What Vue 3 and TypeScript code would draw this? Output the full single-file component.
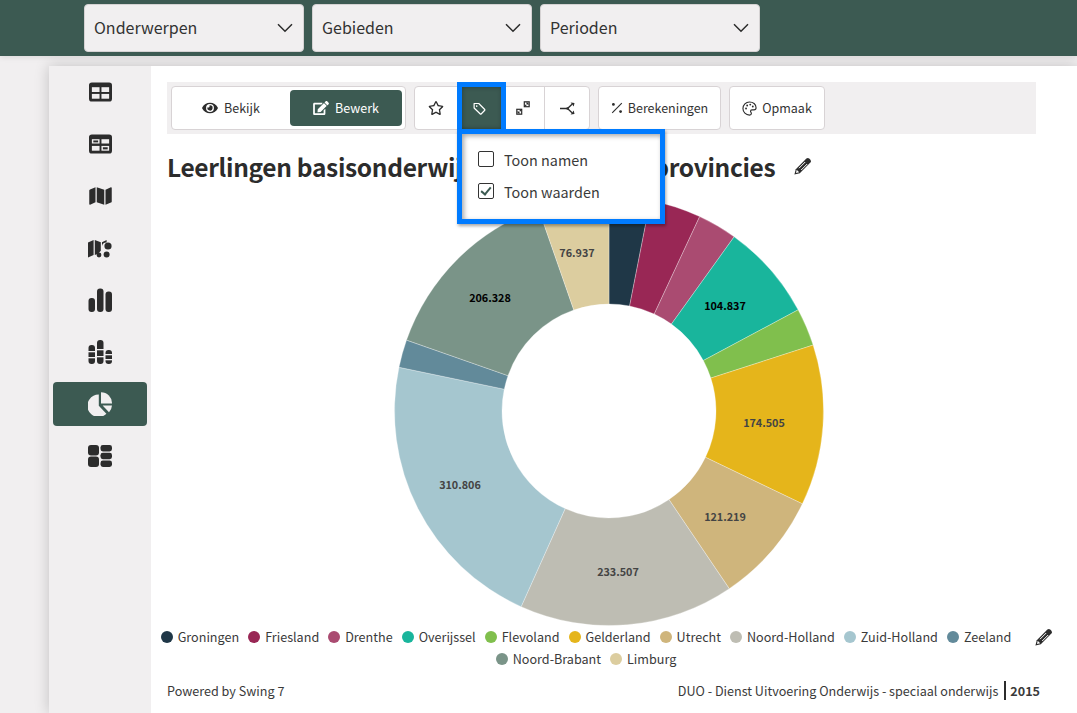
<script setup lang="ts">
interface Slice { name: string; value: number; color: string; label?: string; lx?: number; ly?: number; lc?: string }

const slices: Slice[] = [
  { name: 'Groningen', value: 44.5, color: '#1f3747' },
  { name: 'Friesland', value: 55.7, color: '#992755' },
  { name: 'Drenthe', value: 42.8, color: '#aa4b71' },
  { name: 'Overijssel', value: 104.837, color: '#19b59c', label: '104.837', lx: 725, ly: 305, lc: '#000' },
  { name: 'Flevoland', value: 41, color: '#80bf4d' },
  { name: 'Gelderland', value: 174.505, color: '#e5b51b', label: '174.505', lx: 764, ly: 422, lc: '#444' },
  { name: 'Utrecht', value: 121.219, color: '#cfb57c', label: '121.219', lx: 725, ly: 516, lc: '#444' },
  { name: 'Noord-Holland', value: 233.507, color: '#bebdb3', label: '233.507', lx: 618, ly: 571, lc: '#444' },
  { name: 'Zuid-Holland', value: 310.806, color: '#a5c6cf', label: '310.806', lx: 460, ly: 484, lc: '#444' },
  { name: 'Zeeland', value: 30.2, color: '#628a9a' },
  { name: 'Noord-Brabant', value: 206.328, color: '#7a9488', label: '206.328', lx: 490, ly: 297, lc: '#000' },
  { name: 'Limburg', value: 76.937, color: '#dccd9f', label: '76.937', lx: 577, ly: 252, lc: '#444' },
]

// svg origin on the page: chart box is 440 square, centred on the donut
const cx = 220
const cy = 220
const R = 214.5
const r = 107
const originX = 609 - cx
const originY = 411.5 - cy

const total = slices.reduce((s, x) => s + x.value, 0)
const pt = (rad: number, a: number) =>
  `${(cx + rad * Math.sin(a)).toFixed(2)} ${(cy - rad * Math.cos(a)).toFixed(2)}`

let acc = 0
const arcs = slices.map((s) => {
  const a0 = (acc / total) * Math.PI * 2
  acc += s.value
  const a1 = (acc / total) * Math.PI * 2
  const large = a1 - a0 > Math.PI ? 1 : 0
  return {
    ...s,
    d: `M${pt(R, a0)} A${R} ${R} 0 ${large} 1 ${pt(R, a1)} L${pt(r, a1)} A${r} ${r} 0 ${large} 0 ${pt(r, a0)} Z`,
    tx: (s.lx ?? 0) - originX,
    ty: (s.ly ?? 0) - originY,
  }
})

const filters = ['Onderwerpen', 'Gebieden', 'Perioden']
</script>

<template>
  <div class="page">
    <header class="topbar">
      <div v-for="f in filters" :key="f" class="select">
        <span>{{ f }}</span>
        <svg class="chev" viewBox="0 0 16 10" width="16" height="10"><path d="M1 1.2l7 7 7-7" fill="none" stroke="#2b2b2b" stroke-width="1.5" /></svg>
      </div>
    </header>

    <div class="card">
      <nav class="side">
        <div class="nav">
          <svg viewBox="0 0 24 20" width="23" height="20"><rect width="24" height="20" rx="3" fill="#2c2c2c" /><g fill="#f1eff0"><rect x="3" y="5" width="8" height="5" /><rect x="13" y="5" width="8" height="5" /><rect x="3" y="12" width="8" height="5" /><rect x="13" y="12" width="8" height="5" /></g></svg>
        </div>
        <div class="nav">
          <svg viewBox="0 0 24 20" width="23" height="20"><rect width="24" height="20" rx="3" fill="#2c2c2c" /><g fill="#f1eff0"><rect x="3" y="5" width="8" height="4.5" /><rect x="13" y="5" width="8" height="4.5" /><rect x="3" y="12" width="8" height="5" /><rect x="13" y="12" width="8" height="5" /></g><g fill="#2c2c2c"><rect x="4.5" y="6.3" width="5" height="2" /><rect x="14.5" y="13.4" width="5" height="2.2" /></g></svg>
        </div>
        <div class="nav">
          <svg viewBox="0 0 576 512" width="23" height="20"><path fill="#2c2c2c" d="M0 117.66v346.32c0 11.32 11.43 19.06 21.94 14.86L160 416V32L20.12 87.95A32.006 32.006 0 0 0 0 117.66zM192 416l192 64V96L192 32v384zM554.06 33.16L416 96v384l139.88-55.95A31.996 31.996 0 0 0 576 394.34V48.02c0-11.32-11.43-19.06-21.94-14.86z" /></svg>
        </div>
        <div class="nav">
          <svg viewBox="0 0 24 20" width="24" height="20"><path fill="#2c2c2c" d="M0 4.5L5.6 2v15L0 19.4zM6.8 2l6 2.2v8.5l-2.8 3-3.2 1.3zM14 4.2L18.6 2v2.6a4 4 0 0 0-4.6 3.4z" /><circle cx="20" cy="8" r="3.6" fill="#2c2c2c" /><circle cx="11" cy="17" r="2.4" fill="#2c2c2c" /><circle cx="18.6" cy="16.6" r="3" fill="#2c2c2c" /></svg>
        </div>
        <div class="nav">
          <svg viewBox="0 0 24 24" width="24" height="24"><g fill="#2c2c2c"><rect x="0.5" y="10" width="6.5" height="14" rx="3" /><rect x="9" y="0.5" width="6.5" height="23.5" rx="3" /><rect x="17.5" y="3.5" width="6.5" height="20.5" rx="3" /></g></svg>
        </div>
        <div class="nav">
          <svg viewBox="0 0 24 24" width="24" height="24"><g fill="#2c2c2c"><rect x="0.5" y="5" width="6.5" height="19" rx="3" /><rect x="9" y="0" width="6.5" height="24" rx="3" /><rect x="17.5" y="10" width="6.5" height="14" rx="3" /></g><g fill="#f1eff0"><rect x="0" y="11" width="7.5" height="1.3" /><rect x="0" y="17" width="7.5" height="1.3" /><rect x="8.5" y="9" width="7.5" height="1.3" /><rect x="8.5" y="16" width="7.5" height="1.3" /><rect x="17" y="14" width="7.5" height="1.3" /><rect x="17" y="19" width="7.5" height="1.3" /></g></svg>
        </div>
        <div class="nav active">
          <svg viewBox="0 0 24 24" width="24" height="24"><g fill="#f1eff0"><path d="M10.8 2.6v11.2l7.6 8A11.2 11.2 0 1 1 10.8 2.6z" /><path d="M13 0.2A11 11 0 0 1 24 11.4H13z" /><path d="M14.6 13.4H24a11 11 0 0 1-3 6.8z" /></g></svg>
        </div>
        <div class="nav">
          <svg viewBox="0 0 24 22" width="24" height="22"><g fill="#2c2c2c"><rect x="0" y="0" width="11" height="10.4" rx="3" /><rect x="0" y="11.6" width="11" height="10.4" rx="3" /><rect x="12.5" y="0" width="11.5" height="6.4" rx="2.4" /><rect x="12.5" y="7.8" width="11.5" height="6.4" rx="2.4" /><rect x="12.5" y="15.6" width="11.5" height="6.4" rx="2.4" /></g></svg>
        </div>
      </nav>

      <main class="main">
        <div class="toolbar">
          <div class="group mode">
            <div class="mode-btn">
              <svg viewBox="0 0 576 512" width="16" height="14"><path fill="#2c2c2c" d="M572.52 241.4C518.29 135.59 410.93 64 288 64S57.68 135.64 3.48 241.41a32.35 32.35 0 0 0 0 29.19C57.71 376.41 165.07 448 288 448s230.32-71.64 284.52-177.41a32.35 32.35 0 0 0 0-29.19zM288 400a144 144 0 1 1 144-144 143.93 143.93 0 0 1-144 144zm0-240a95.31 95.31 0 0 0-25.31 3.79 47.85 47.85 0 0 1-66.9 66.9A95.78 95.78 0 1 0 288 160z" /></svg>
              <span>Bekijk</span>
            </div>
            <div class="mode-btn on">
              <svg viewBox="0 0 576 512" width="16" height="14"><path fill="#fff" d="M402.6 83.2l90.2 90.2c3.8 3.8 3.8 10 0 13.8L274.4 405.6l-92.8 10.3c-12.4 1.4-22.9-9.1-21.5-21.5l10.3-92.8L388.8 83.2c3.8-3.8 10-3.8 13.8 0zm162-22.9l-48.8-48.8c-15.2-15.2-39.9-15.2-55.2 0l-35.4 35.4c-3.8 3.8-3.8 10 0 13.8l90.2 90.2c3.8 3.8 10 3.8 13.8 0l35.4-35.4c15.2-15.3 15.2-40 0-55.2zM384 346.2V448H64V128h229.8c3.2 0 6.2-1.3 8.5-3.5l40-40c7.6-7.6 2.2-20.5-8.5-20.5H48C21.5 64 0 85.5 0 112v352c0 26.5 21.5 48 48 48h352c26.5 0 48-21.5 48-48V306.2c0-10.7-12.9-16-20.5-8.5l-40 40c-2.2 2.3-3.5 5.3-3.5 8.5z" /></svg>
              <span>Bewerk</span>
            </div>
          </div>

          <div class="group tools">
            <div class="tool star">
              <svg viewBox="0 0 576 512" width="16" height="14"><path fill="#2c2c2c" d="M528.1 171.5L382 150.2 316.7 17.8c-11.7-23.6-45.6-23.9-57.4 0L194 150.2 47.9 171.5c-26.2 3.8-36.7 36.1-17.7 54.6l105.7 103-25 145.5c-4.5 26.3 23.2 46 46.4 33.7L288 439.6l130.7 68.7c23.2 12.2 50.9-7.4 46.4-33.7l-25-145.5 105.7-103c19-18.5 8.5-50.8-17.7-54.6zM388.6 312.3l23.7 138.4L288 385.4l-124.3 65.3 23.7-138.4-100.6-98 139-20.2 62.2-126 62.2 126 139 20.2-100.6 98z" /></svg>
            </div>
            <div class="tool tag">
              <svg viewBox="0 0 14 14" width="13" height="13"><path d="M1.2 1.6h5l6.2 6.2a1 1 0 0 1 0 1.4l-3.4 3.4a1 1 0 0 1-1.4 0L1.2 6.4z" fill="none" stroke="#fff" stroke-width="1.3" stroke-linejoin="round" /><circle cx="4" cy="4.4" r="0.9" fill="#fff" /></svg>
            </div>
            <div class="tool arrows">
              <svg viewBox="0 0 14 14" width="14" height="14"><g fill="none" stroke="#2c2c2c" stroke-width="1.2"><path d="M8.400 5.600l2-2" /><path d="M5.600 8.400l-2 2" /><rect x="8.300" y="0.800" width="4.900" height="4.900" /><rect x="0.800" y="8.300" width="4.900" height="4.900" /></g><g fill="#2c2c2c"><path d="M9.500 1.500h3v3z" /><path d="M1.500 12.500v-3l3 3z" /></g></svg>
            </div>
            <div class="tool share">
              <svg viewBox="0 0 15 13" width="15" height="13"><g fill="none" stroke="#2c2c2c" stroke-width="1.3"><path d="M0 6.500h7.500L12 2.200M7.500 6.500l4.500 4.300" /></g><g fill="#2c2c2c"><path d="M10.600 0.600l3.900.3-.8 3.700z" /><path d="M10.600 12.400l3.900-.3-.8-3.700z" /><circle cx="7.500" cy="6.500" r="1.200" /></g></svg>
            </div>
          </div>

          <div class="group text-btn calc">
            <svg viewBox="0 0 12 12" width="12" height="12"><path d="M1.2 10.8L10.8 1.2" stroke="#2c2c2c" stroke-width="1.1" /><circle cx="2.4" cy="2.4" r="1.4" fill="#2c2c2c" /><circle cx="9.6" cy="9.6" r="1.4" fill="#2c2c2c" /></svg>
            <span>Berekeningen</span>
          </div>
          <div class="group text-btn fmt">
            <svg viewBox="0 0 16 16" width="15" height="15"><path d="M8 1a7 7 0 0 0 0 14c1.400 0 2-.8 2-1.700 0-1.200-.9-1.500-.9-2.500 0-.8.6-1.300 1.500-1.300h2.100c1.500 0 2.300-1 2.300-2.300C15 3.500 11.800 1 8 1z" fill="none" stroke="#2c2c2c" stroke-width="1.2" /><g fill="#2c2c2c"><circle cx="4.300" cy="8" r="1" /><circle cx="5.500" cy="4.800" r="1" /><circle cx="8.800" cy="3.800" r="1" /><circle cx="11.500" cy="5.800" r="1" /></g></svg>
            <span>Opmaak</span>
          </div>

          <div class="hl-button" aria-hidden="true"></div>
          <div class="menu">
            <label class="check"><input type="checkbox" /><span>Toon namen</span></label>
            <label class="check"><input type="checkbox" checked /><span>Toon waarden</span></label>
          </div>
        </div>

        <div class="title-row">
          <h1>Leerlingen basisonderwijs naar de twaalf provincies</h1>
          <svg class="pencil" viewBox="0 0 20 20" width="20" height="20"><path d="M1.400 18.600l1.400-5.400L13.400 2.600a2 2 0 0 1 2.800 0l1.200 1.200a2 2 0 0 1 0 2.800L6.800 17.200z" fill="#2c2c2c" /><path d="M3.700 13.800l2.500 2.500-3.200.8z" fill="#fff" /><path d="M6 12.200l6.200-6.200M8.200 14l6-6" stroke="#fff" stroke-width="1" /></svg>
        </div>

        <div class="chart">
          <svg viewBox="0 0 440 440" width="440" height="440">
            <path v-for="a in arcs" :key="a.name" :d="a.d" :fill="a.color" stroke="#fff" stroke-width="0.3" />
            <template v-for="a in arcs" :key="a.name + '-l'">
              <text v-if="a.label" :x="a.tx" :y="a.ty" :fill="a.lc" class="val" text-anchor="middle" dominant-baseline="central">{{ a.label }}</text>
            </template>
          </svg>
        </div>

        <div class="legend-row">
          <ul class="legend">
            <li v-for="s in slices" :key="s.name">
              <i :style="{ background: s.color }"></i>{{ s.name }}
            </li>
          </ul>
          <svg class="pencil" viewBox="0 0 20 20" width="20" height="20"><path d="M1.400 18.600l1.400-5.400L13.400 2.600a2 2 0 0 1 2.800 0l1.200 1.200a2 2 0 0 1 0 2.800L6.800 17.200z" fill="#2c2c2c" /><path d="M3.700 13.800l2.500 2.500-3.200.8z" fill="#fff" /><path d="M6 12.200l6.200-6.200M8.200 14l6-6" stroke="#fff" stroke-width="1" /></svg>
        </div>

        <footer class="foot">
          <span>Powered by Swing 7</span>
          <span>DUO - Dienst Uitvoering Onderwijs - speciaal onderwijs <b>2015</b></span>
        </footer>
      </main>
    </div>
  </div>
</template>

<style>
html, body { margin: 0; background: #f1eff0; overflow: hidden; }
</style>

<style scoped>
.page {
  width: 1077px;
  height: 713px;
  overflow: hidden;
  font-family: "Noto Sans CJK SC", "Noto Sans", sans-serif;
  color: #2c2c2c;
  background: #f1eff0;
  display: flex;
  flex-direction: column;
}
.topbar {
  height: 56px;
  flex: none;
  background: #3c5a52;
  display: flex;
  gap: 8px;
  padding: 4px 0 0 84px;
  box-sizing: border-box;
  box-shadow: 0 1px 6px rgba(0, 0, 0, .1);
  position: relative;
  z-index: 1;
}
.select {
  width: 220px;
  height: 48px;
  box-sizing: border-box;
  background: #f1eff0;
  border: 1px solid #d5d2d3;
  border-radius: 4px;
  padding: 0 9px 2px;
  display: flex;
  align-items: center;
  justify-content: space-between;
  font-size: 16px;
  color: #333;
}
.chev { margin: 2px 1px 0 0; }
.card {
  flex: 1;
  margin: 10px 0 0 49px;
  display: flex;
  background: #fff;
  box-shadow: 0 0 14px rgba(0, 0, 0, .2);
  min-height: 0;
}
.side {
  width: 102px;
  flex: none;
  background: #f1eff0;
  padding: 4px 4px 0;
  box-sizing: border-box;
  display: flex;
  flex-direction: column;
  gap: 8px;
}
.nav {
  height: 44px;
  border-radius: 4px;
  display: flex;
  align-items: center;
  justify-content: center;
}
.nav.active { background: #3c5a52; }
.main {
  flex: 1;
  min-width: 0;
  position: relative;
  display: flex;
  flex-direction: column;
}
.toolbar {
  position: relative;
  z-index: 3;
  margin: 16px 41px 0 16px;
  height: 52px;
  box-sizing: border-box;
  background: #f1eff0;
  padding: 4px;
  display: flex;
  gap: 8px;
  font-size: 12.5px;
  color: #333;
}
.group {
  background: #fff;
  border: 1px solid #d8d3d5;
  border-radius: 4px;
  box-sizing: border-box;
  height: 44px;
  display: flex;
}
.group svg { flex: none; }
.group span { position: relative; top: -1px; }
.mode { width: 235px; padding: 3px; gap: 3px; }
.mode-btn {
  flex: none;
  height: 36px;
  display: flex;
  align-items: center;
  justify-content: center;
  gap: 6px;
  border-radius: 4px;
  width: 112px;
}
.mode-btn.on { background: #3c5a52; color: #fff; }
.tools { width: 176px; overflow: hidden; }
.tool {
  display: flex;
  align-items: center;
  justify-content: center;
  height: 100%;
}
.star { width: 47px; padding-right: 4px; box-sizing: border-box; border-right: 1px solid #d8d3d5; }
.tag { width: 40px; background: #3c5a52; box-shadow: inset 0 0 5px rgba(0, 0, 0, .3); padding-right: 4px; box-sizing: border-box; }
.arrows { width: 44px; border-right: 1px solid #d8d3d5; box-sizing: border-box; }
.share { width: 44px; }
.text-btn { align-items: center; justify-content: center; gap: 5px; }
.calc { width: 123px; }
.fmt { width: 96px; }
.hl-button {
  position: absolute;
  left: 290px;
  top: 0;
  width: 49px;
  height: 48px;
  box-sizing: border-box;
  border: 5px solid #007bff;
  border-bottom: 0;
  pointer-events: none;
}
.menu {
  position: absolute;
  left: 290px;
  top: 47px;
  width: 208px;
  height: 95px;
  box-sizing: border-box;
  background: #fff;
  border: 5px solid #007bff;
  box-shadow: inset 2px 2px 5px rgba(0, 0, 0, .35), 1px 2px 3px rgba(0, 0, 0, .35);
  padding: 13px 0 0 16px;
  display: flex;
  flex-direction: column;
  gap: 8px;
  font-size: 14.4px;
  color: #3a3a3a;
}
.check { display: flex; align-items: center; gap: 10px; height: 24px; }
.check input {
  appearance: none;
  margin: 0;
  width: 16px;
  height: 16px;
  box-sizing: border-box;
  border: 1px solid #333;
  border-radius: 2px;
  background: #fff;
  position: relative;
}
.check input:checked::after {
  content: "";
  position: absolute;
  left: 4px;
  top: 1px;
  width: 4px;
  height: 8px;
  border: solid #3c5a52;
  border-width: 0 2.5px 2.5px 0;
  transform: rotate(40deg);
}
.title-row {
  margin: 14px 0 0 16px;
  height: 36px;
  display: flex;
  align-items: center;
  gap: 18px;
}
.title-row h1 {
  margin: 0;
  font-size: 24.5px;
  font-weight: 700;
  letter-spacing: -0.33px;
  color: #2c2c2c;
  white-space: nowrap;
}
.chart {
  margin: 7px 0 0 238px;
  height: 435px;
  flex: none;
}
.chart svg { display: block; }
.val { font-size: 10.8px; font-weight: 700; font-family: "Noto Sans CJK SC", "Noto Sans", sans-serif; }
.legend-row { display: flex; align-items: flex-start; }
.legend {
  list-style: none;
  margin: 0;
  padding: 0;
  width: 870px;
  flex: none;
  display: flex;
  flex-wrap: wrap;
  justify-content: center;
  column-gap: 9px;
  font-size: 12.6px;
  line-height: 22px;
  color: #3a3a3a;
}
.legend li { display: flex; align-items: center; gap: 5px; white-space: nowrap; }
.legend i { width: 12px; height: 12px; border-radius: 50%; display: block; }
.legend-row .pencil { margin: 1px 0 0 13px; }
.foot {
  margin: 10px 37px 0 16px;
  display: flex;
  justify-content: space-between;
  font-size: 12.6px;
  line-height: 22px;
  color: #3a3a3a;
}
.foot b { border-left: 2px solid #2c2c2c; padding-left: 4px; margin-left: 3px; font-weight: 700; }
</style>
